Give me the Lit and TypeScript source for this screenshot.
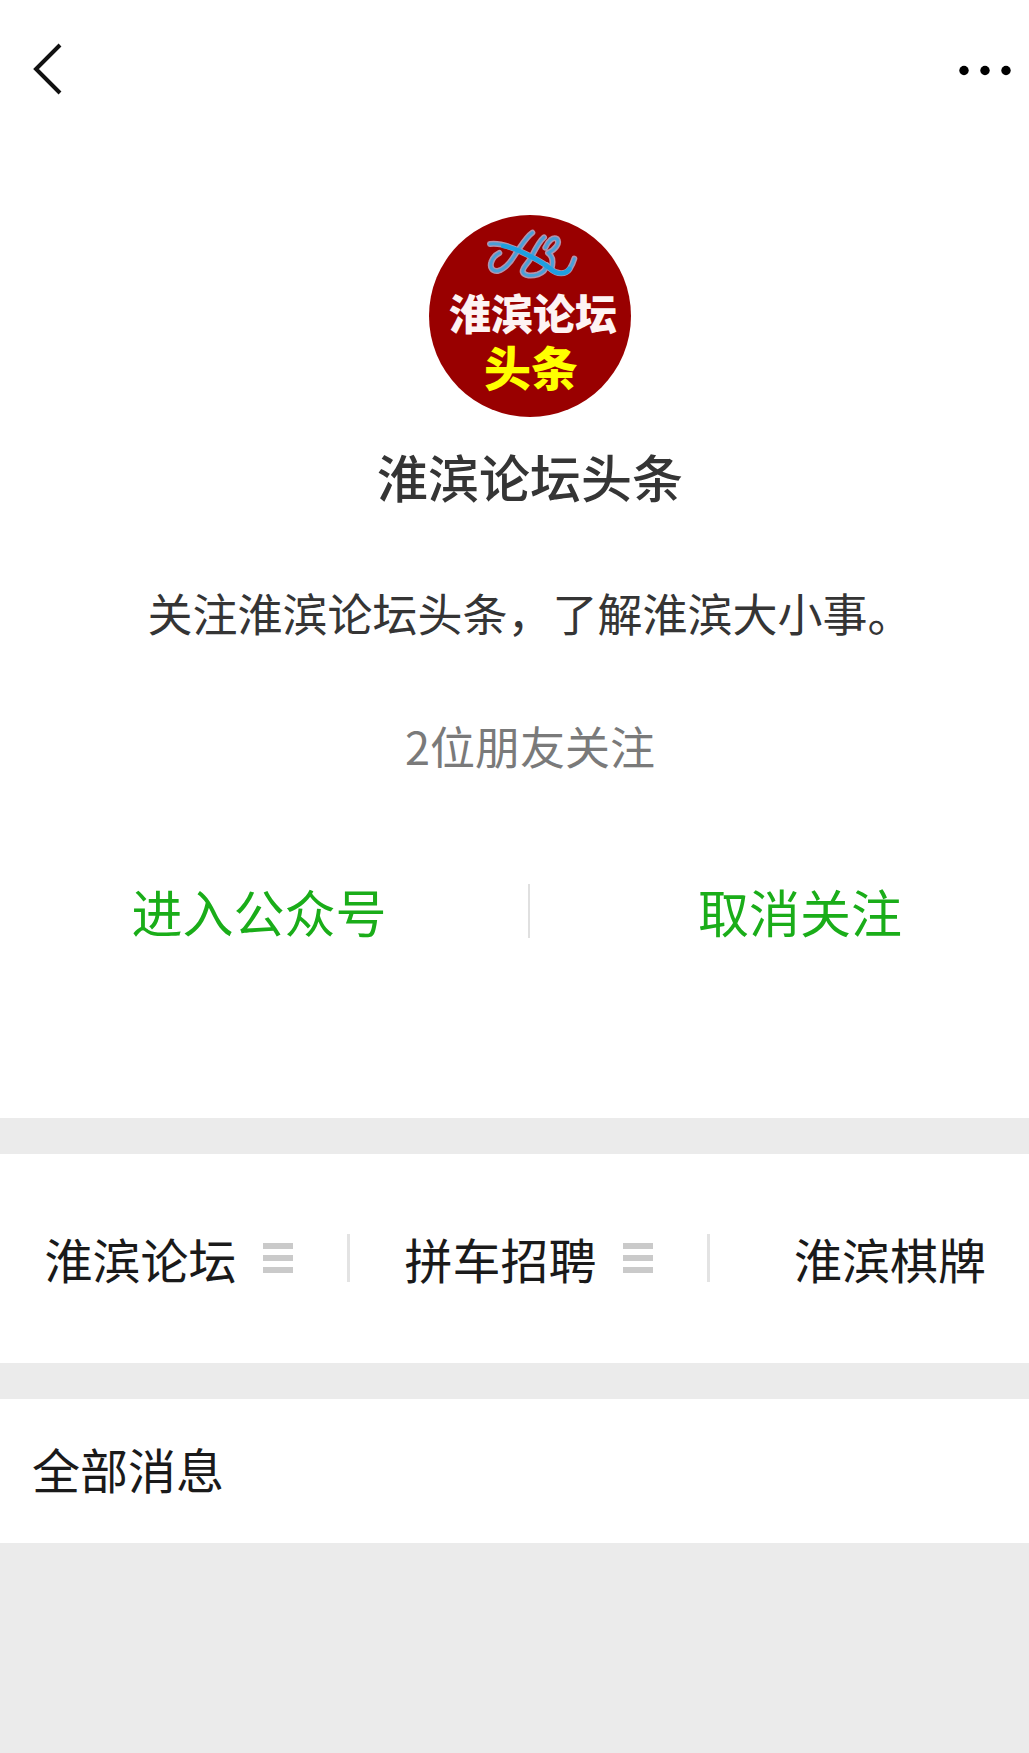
import { LitElement, html, css, svg } from "lit";
import { customElement } from "lit/decorators.js";

interface MenuEntry {
  label: string;
  hasSubmenu: boolean;
}

const MENU: MenuEntry[] = [
  { label: "淮滨论坛", hasSubmenu: true },
  { label: "拼车招聘", hasSubmenu: true },
  { label: "淮滨棋牌", hasSubmenu: false },
];

// Brush-like monogram, drawn twice: a pale outline below, the blue ink on top.
const SWEEP =
  "M70 69 C95 72 115 82 135 92 C165 106 190 120 212 138 C232 156 258 154 268 138";
const MONOGRAM = [
  "M30 63 C55 60 90 70 120 85 C160 103 190 118 212 138 C232 156 258 154 269 138 C276 127 280 117 283 107",
  "M157 29 C138 42 124 68 106 94 C92 118 74 138 54 144 C36 146 29 132 34 117 C38 104 46 96 58 90",
  "M192 43 C176 56 164 82 152 106 C142 124 128 132 128 146 C132 160 156 160 174 154 C190 148 198 138 200 126",
  "M196 74 C204 54 220 40 231 48 C241 60 226 80 204 90 C216 98 222 112 214 138",
];

@customElement("account-avatar")
export class AccountAvatar extends LitElement {
  static styles = css`
    :host {
      display: block;
      width: 204px;
      height: 204px;
    }
    .badge {
      display: block;
      width: 100%;
      height: 100%;
    }
    .disc {
      fill: #990000;
    }
    .outline,
    .ink,
    .sweep {
      fill: none;
      stroke-linecap: round;
      stroke-linejoin: round;
    }
    .outline {
      stroke: #b294ae;
      stroke-width: 18;
    }
    .ink {
      stroke: #4a9fd6;
      stroke-width: 9;
    }
    .sweep {
      stroke: #1f9fe0;
      stroke-width: 14;
    }
    .words {
      font-family: "Noto Sans CJK SC", sans-serif;
      font-weight: 900;
      text-anchor: middle;
    }
    .name {
      fill: #fdf3f3;
      font-size: 42px;
    }
    .tag {
      fill: #ffff00;
      font-size: 47px;
    }
  `;

  render() {
    return html`
      <svg class="badge" viewBox="0 0 204 204" role="img" aria-label="淮滨论坛头条">
        <circle class="disc" cx="102" cy="102" r="101"></circle>
        <g transform="translate(52 9) scale(0.3333)">
          ${MONOGRAM.map((d) => svg`<path class="outline" d=${d}></path>`)}
          ${MONOGRAM.map((d) => svg`<path class="ink" d=${d}></path>`)}
          <path class="sweep" d=${SWEEP}></path>
        </g>
        <text class="words"><tspan class="name" x="105" y="116">淮滨论坛</tspan><tspan class="tag" x="103" y="172">头条</tspan></text>
      </svg>
    `;
  }
}

@customElement("app-root")
export class AppRoot extends LitElement {
  static styles = css`
    :host {
      display: block;
      min-height: 100vh;
      overflow: hidden;
      background: #ebebeb;
      color: #1a1a1a;
      font-family: "Noto Sans CJK SC", "Noto Sans", sans-serif;
      --bleed-left: 10px;
      --bleed-right: 41px;
    }
    button {
      margin: 0;
      padding: 0;
      border: 0;
      background: none;
      color: inherit;
      font: inherit;
      cursor: pointer;
    }
    h1,
    h2,
    p {
      margin: 0;
    }
    .top {
      background: #fff;
    }
    .bar {
      display: flex;
      justify-content: space-between;
      align-items: center;
      height: 140px;
      padding: 0 15px 0 24px;
    }
    .icon {
      display: block;
    }
    .profile,
    .actions,
    .menu {
      margin: 0 calc(-1 * var(--bleed-right)) 0 calc(-1 * var(--bleed-left));
    }
    .profile {
      display: flex;
      flex-direction: column;
      align-items: center;
      padding-top: 74px;
      line-height: 60px;
      font-size: 45px;
      color: #353535;
    }
    .title {
      margin-top: 28px;
      font-size: 51px;
      font-weight: 500;
    }
    .about {
      margin-top: 77px;
    }
    .friends {
      margin-top: 73px;
      color: #7a7a7a;
    }
    .actions {
      display: grid;
      grid-template-columns: 1fr 1fr;
      padding: 108px 0 180px;
    }
    .action {
      height: 54px;
      font-size: 51px;
      line-height: 54px;
      padding-bottom: 2px;
      color: #1aad19;
    }
    .action:first-child {
      border-right: 2px solid #e0e0e0;
    }
    .menu-band {
      margin: 36px 0;
      background: #fff;
    }
    .menu {
      display: grid;
      grid-template-columns: repeat(3, 1fr);
      padding: 80px 0 81px;
    }
    .entry {
      display: flex;
      align-items: center;
      justify-content: center;
      gap: 26px;
      height: 48px;
      font-size: 48px;
      line-height: 48px;
    }
    .entry:not(:last-child) {
      border-right: 3px solid #e3e3e3;
    }
    .messages {
      padding: 33px 32px 39px;
      background: #fff;
      font-size: 48px;
      line-height: 72px;
      font-weight: 400;
    }
  `;

  private renderEntry(entry: MenuEntry) {
    return html`
      <button class="entry" type="button">
        <span>${entry.label}</span>
        ${entry.hasSubmenu
          ? html`<svg class="icon" width="30" height="30" viewBox="0 0 30 30" fill="#cacaca" aria-hidden="true">
              <path d="M0 0h30v6H0zM0 12h30v6H0zM0 24h30v6H0z"></path>
            </svg>`
          : null}
      </button>
    `;
  }

  render() {
    return html`
      <header class="top">
        <nav class="bar">
          <button type="button" aria-label="返回">
            <svg class="icon" width="48" height="60" viewBox="0 0 48 60" aria-hidden="true">
              <path d="M36 5L12 29L36 53" fill="none" stroke="#111" stroke-width="4"></path>
            </svg>
          </button>
          <button type="button" aria-label="更多">
            <svg class="icon" width="60" height="60" viewBox="0 0 60 60" aria-hidden="true">
              <circle cx="10" cy="30.5" r="4.7"></circle>
              <circle cx="31" cy="30.5" r="4.7"></circle>
              <circle cx="52" cy="30.5" r="4.7"></circle>
            </svg>
          </button>
        </nav>
        <section class="profile">
          <account-avatar></account-avatar>
          <h1 class="title">淮滨论坛头条</h1>
          <p class="about">关注淮滨论坛头条，了解淮滨大小事。</p>
          <p class="friends">2位朋友关注</p>
        </section>
        <div class="actions">
          <button class="action" type="button">进入公众号</button>
          <button class="action" type="button">取消关注</button>
        </div>
      </header>
      <nav class="menu-band">
        <div class="menu">${MENU.map((entry) => this.renderEntry(entry))}</div>
      </nav>
      <h2 class="messages">全部消息</h2>
    `;
  }
}
